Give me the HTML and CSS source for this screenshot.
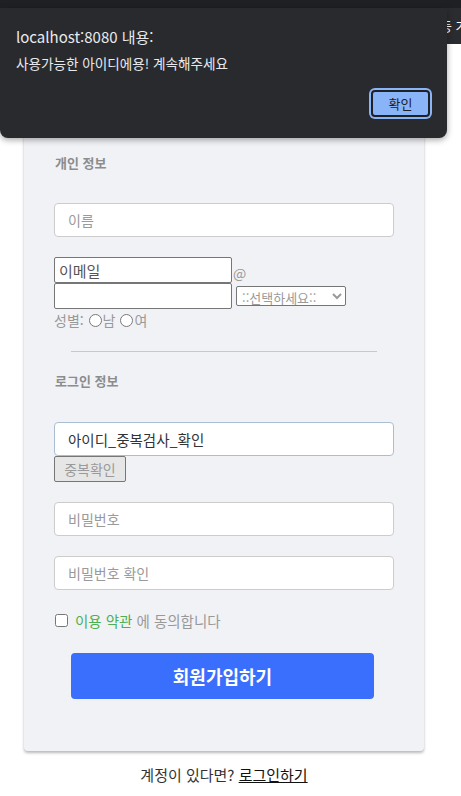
FILE: index.html
```html
<!DOCTYPE html>
<html lang="ko">
<head>
<meta charset="utf-8">
<title>회원가입</title>
<link rel="stylesheet" href="styles.css">
</head>
<body>
<div class="topstrip"></div>
<nav class="nav"><span class="nav-text">등 가</span></nav>

<main class="page">
  <form class="card">
    <h3 class="section-title">개인 정보</h3>
    <input class="field field-name" type="text" placeholder="이름">

    <div class="email">
      <div class="email-row">
        <input class="plain" type="text" value="이메일"><span class="at">@</span>
      </div>
      <div class="email-row email-row2">
        <input class="plain" type="text">
        <select class="domain"><option>::선택하세요::</option></select>
      </div>
      <div class="gender">성별: <input class="radio" type="radio" name="g">남 <input class="radio" type="radio" name="g">여</div>
    </div>

    <hr class="divider">

    <h3 class="section-title section-title2">로그인 정보</h3>
    <input class="field field-id" type="text" value="아이디_중복검사_확인">
    <button class="dup" type="button">중복확인</button>

    <input class="field field-pw" type="password" placeholder="비밀번호">
    <input class="field field-pw2" type="password" placeholder="비밀번호 확인">

    <label class="agree"><input class="check" type="checkbox"><span class="terms">이용 약관</span>&nbsp;에 동의합니다</label>

    <button class="submit" type="button">회원가입하기</button>
  </form>
  <p class="login">계정이 있다면? <a href="#" class="login-link">로그인하기</a></p>
</main>

<div class="alert">
  <div class="alert-title">localhost:8080 내용:</div>
  <div class="alert-msg">사용가능한 아이디에용! 계속해주세요</div>
  <div class="alert-actions"><button class="alert-ok" type="button">확인</button></div>
</div>
</body>
</html>
```

FILE: styles.css
```css
* { box-sizing: border-box; }
html, body { margin: 0; padding: 0; background: #ffffff; }
body {
  font-family: "Noto Sans CJK KR", "Noto Sans", "Liberation Sans", sans-serif;
  position: relative;
  width: 461px;
  overflow: hidden;
}
.topstrip { height: 8px; background: #1f2023; }
.nav {
  height: 36px;
  background: #2b2c2f;
  color: #ffffff;
  font-size: 13px;
  line-height: 36px;
  padding-left: 440px;
  white-space: nowrap;
  overflow: hidden;
}
.page { width: 400px; margin-left: 24px; }
.card {
  margin-top: 20px;
  background: #f1f2f6;
  border-radius: 4px;
  box-shadow: 0 2px 3px rgba(0,0,0,0.28);
  padding: 89px 30px 52px 30px;
  display: flex;
  flex-direction: column;
  align-items: flex-start;
}
.section-title {
  margin: 0;
  font-size: 13px;
  line-height: 20px;
  font-weight: bold;
  color: #8c8c8c;
  padding-left: 1px;
}
.section-title2 { margin-top: 19px; }
.field {
  width: 340px;
  height: 34px;
  border: 1px solid #cccccc;
  border-radius: 4px;
  background: #ffffff;
  padding: 0 13px;
  font-family: inherit;
  font-size: 14px;
  color: #333333;
  outline: none;
}
.field::placeholder { color: #9a9a9a; }
.field-name { margin-top: 30px; }
.field-id { margin-top: 31px; border-color: #a8bed3; font-size: 14.5px; }
.field-pw { margin-top: 20px; }
.field-pw2 { margin-top: 20px; }

.email { margin-top: 20px; display: flex; flex-direction: column; }
.email-row { display: flex; align-items: flex-end; height: 26px; }
.email-row2 { align-items: center; }
.plain {
  width: 178px;
  height: 26px;
  border: 1px solid #767676;
  border-radius: 2px;
  background: #ffffff;
  padding: 0 4px;
  font-family: inherit;
  font-size: 15px;
  color: #555555;
  outline: none;
}
.at { color: #999999; font-size: 14px; line-height: 20px; margin-left: 1px; }
.domain {
  margin-left: 4px;
  width: 110px;
  height: 20px;
  font-family: inherit;
  font-size: 13px;
  color: #9a9a9a;
  border: 1px solid #767676;
  border-radius: 2px;
  background: #ffffff;
  padding: 0 0 0 1px;
}
.gender {
  margin-top: 1px;
  font-size: 14px;
  line-height: 20px;
  color: #999999;
  display: flex;
  align-items: center;
  white-space: pre;
}
.radio { margin: 0 1px 0 1px; width: 13px; height: 13px; }

.divider {
  align-self: flex-start;
  margin: 21px 0 0 17px;
  width: 306px;
  border: 0;
  border-top: 1px solid #c8c8cc;
  height: 0;
}

.dup {
  width: 72px;
  height: 26px;
  margin: 0;
  padding: 0;
  border: 1px solid #767676;
  border-radius: 2px;
  background: #e6e6e6;
  color: #9a9a9a;
  font-family: inherit;
  font-size: 14px;
}

.agree {
  margin-top: 20px;
  height: 20px;
  display: flex;
  align-items: center;
  font-size: 14.5px;
  color: #999999;
  white-space: pre;
}
.check { margin: 0 7px 0 1px; width: 13px; height: 13px; }
.terms { color: #4caf50; }

.submit {
  margin: 23px 0 0 17px;
  width: 303px;
  height: 46px;
  border: 0;
  border-radius: 4px;
  background: #3a6ffe;
  color: #ffffff;
  font-family: inherit;
  font-size: 18px;
  font-weight: bold;
}

.login {
  margin: 14px 0 0 0;
  text-align: center;
  font-size: 15px;
  line-height: 20px;
  color: #333333;
}
.login-link { color: #111111; text-decoration: underline; }

.alert {
  position: absolute;
  top: 8px;
  left: 0;
  width: 447px;
  height: 130px;
  background: #292a2d;
  border-radius: 0 0 8px 8px;
  box-shadow: 0 2px 6px rgba(0,0,0,0.35);
  padding: 17px 16px 0 16px;
  color: #e8eaed;
  display: flex;
  flex-direction: column;
}
.alert-title { font-size: 15px; line-height: 24px; }
.alert-msg { margin-top: 4px; font-size: 13.6px; line-height: 20px; }
.alert-actions { margin-top: 17px; display: flex; justify-content: flex-end; padding-right: 1px; }
.alert-ok {
  width: 59px;
  height: 27px;
  background: #8ab4f8;
  border: 2px solid #202124;
  border-radius: 4px;
  box-shadow: 0 0 0 2px #8ab4f8;
  color: #202124;
  font-family: inherit;
  font-size: 13px;
  padding: 0;
}
```
